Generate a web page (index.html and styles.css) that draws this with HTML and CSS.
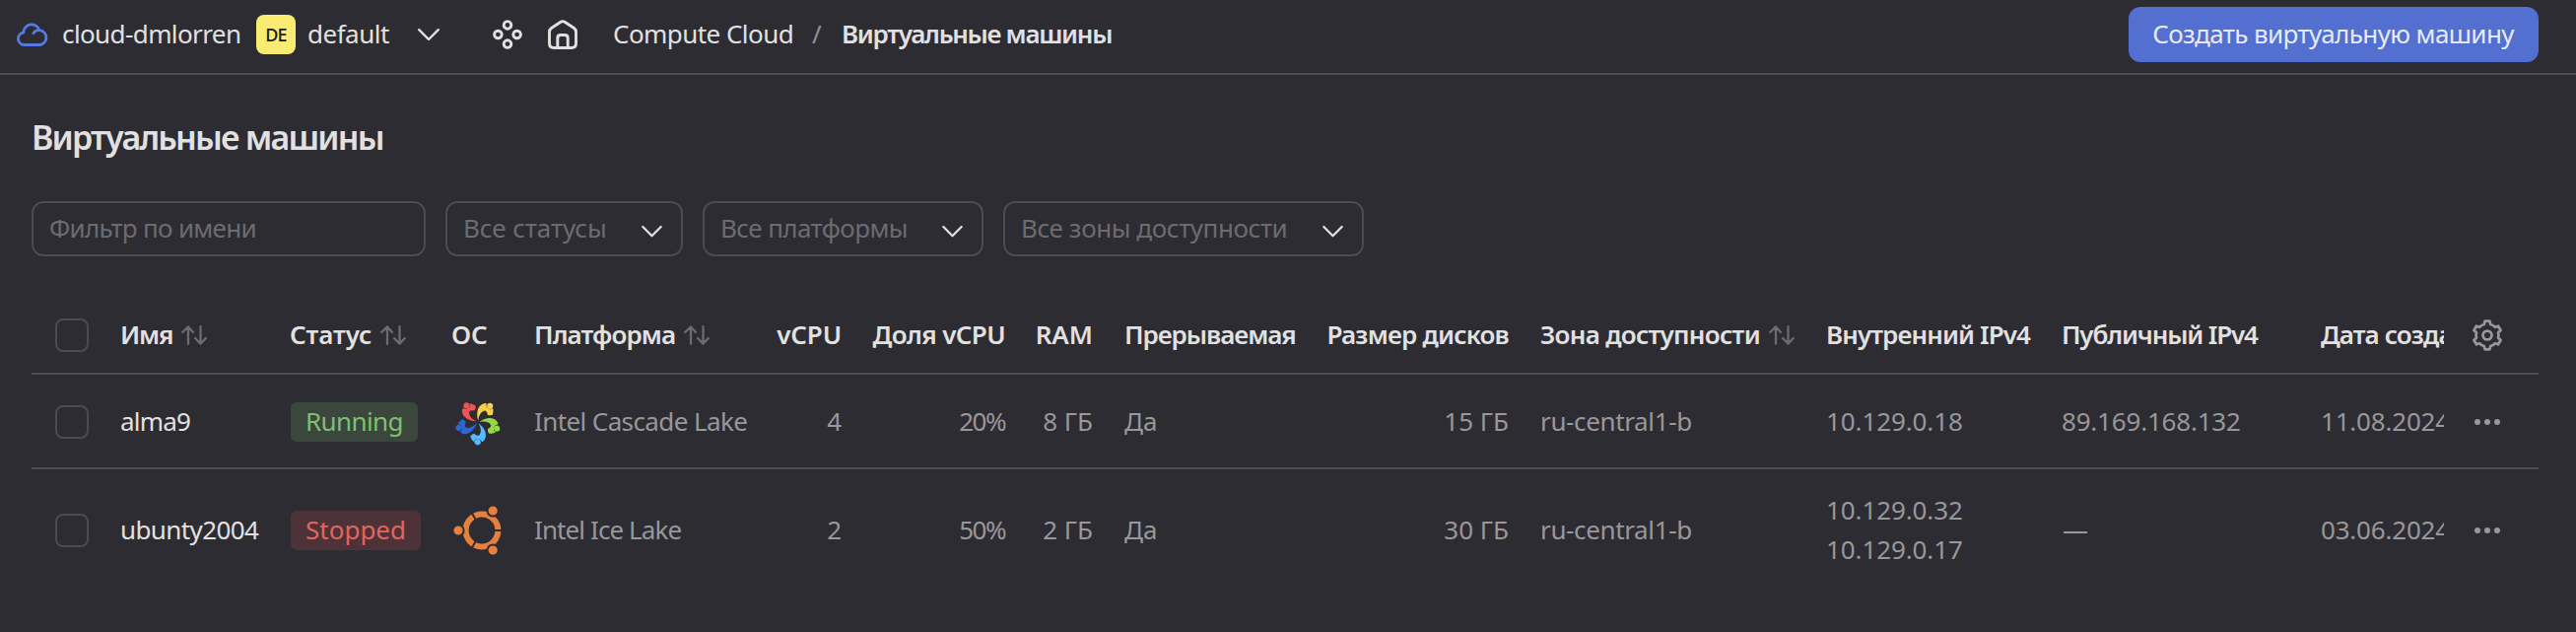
FILE: index.html
```html
<!DOCTYPE html>
<html lang="ru">
<head>
<meta charset="utf-8">
<title>Виртуальные машины</title>
<link rel="stylesheet" href="styles.css">
</head>
<body>
<svg class="defs" aria-hidden="true">
  <symbol id="sort" viewBox="0 0 26 20">
    <path d="M7 18.8V1.6M1.2 7 7 1.4 12 7M19.5 1.2v17.2M14 13l5.5 5.6L24.8 13" fill="none" stroke="currentColor" stroke-width="2.3" stroke-linecap="round" stroke-linejoin="round"/>
  </symbol>
  <symbol id="chevron" viewBox="0 0 24 16">
    <path d="M2.2 3.2 12 13l9.8-9.8" fill="none" stroke="currentColor" stroke-width="2.4" stroke-linecap="round" stroke-linejoin="round"/>
  </symbol>
  <symbol id="dots" viewBox="0 0 28 8">
    <g fill="currentColor"><circle cx="4" cy="4" r="3"/><circle cx="14" cy="4" r="3"/><circle cx="24" cy="4" r="3"/></g>
  </symbol>
  <symbol id="petal" viewBox="-24 -24 48 48" overflow="visible">
    <path d="M.2-1.500C-2-9-.5-17 6-18.800 7-19 7.800-19 8.600-18.800 8-16.300 9.200-14 11.600-13 13-12.500 14.400-13 15-14.200 15.800-12 15.600-9.500 14.800-7.200 13.400-6.500 11.400-6.600 9.800-7.300 9.700-9 8.900-10.600 7.600-11.600 3.600-11.500 1.200-7.500.2-1.500z"/>
    <circle cx="12.200" cy="-16.200" r="3.100"/>
  </symbol>
</svg>

<header class="topbar">
  <svg class="cloud" viewBox="0 0 34 28"><path d="M9.200 24.500A6.300 6.300 0 0 1 8.800 12 8.300 8.300 0 0 1 25 9.600 7.500 7.500 0 0 1 25.500 24.500ZM18.800 12.800Q20.500 9.500 25 9.600" fill="none" stroke="currentColor" stroke-width="2.800" stroke-linecap="round" stroke-linejoin="round"/></svg>
  <span class="text cloud-name">cloud-dmlorren</span>
  <span class="avatar">DE</span>
  <span class="text folder-name">default</span>
  <svg class="chevron folder-chevron"><use href="#chevron"/></svg>
  <svg class="icon services" viewBox="0 0 30 30"><g fill="none" stroke="currentColor" stroke-width="2.900"><circle cx="15" cy="5.400" r="3.800"/><circle cx="5.400" cy="15" r="3.800"/><circle cx="24.600" cy="15" r="3.800"/><circle cx="15" cy="24.600" r="3.800"/></g></svg>
  <svg class="icon home" viewBox="0 0 30 30"><path d="M1.500 12.500Q1.500 10 3.500 8.500L13 2.200Q15 1 17 2.200L26.500 8.500Q28.500 10 28.500 12.500V24Q28.500 28.500 24 28.500H6Q1.500 28.500 1.500 24ZM9.800 28V18.500Q9.800 15.500 13 15.500H17Q20.200 15.500 20.200 18.500V28" fill="none" stroke="currentColor" stroke-width="2.900" stroke-linejoin="round"/></svg>
  <nav class="crumbs">
    <span class="text crumb">Compute Cloud</span>
    <span class="text slash">/</span>
    <span class="text current">Виртуальные машины</span>
  </nav>
  <button class="create"><span>Создать виртуальную машину</span></button>
</header>

<main class="page">
  <h1 class="title">Виртуальные машины</h1>
  <div class="filters">
    <div class="field search"><span class="ls-7">Фильтр по имени</span></div>
    <div class="field status"><span class="ls-1">Все статусы</span><svg class="chevron"><use href="#chevron"/></svg></div>
    <div class="field platform"><span class="ls-6">Все платформы</span><svg class="chevron"><use href="#chevron"/></svg></div>
    <div class="field zone"><span class="ls-4">Все зоны доступности</span><svg class="chevron"><use href="#chevron"/></svg></div>
  </div>

  <table class="vms">
    <colgroup>
      <col class="c-check"><col class="c-name"><col class="c-status"><col class="c-os"><col class="c-platform"><col class="c-cpu"><col class="c-share"><col class="c-ram"><col class="c-preempt"><col class="c-disk"><col class="c-zone"><col class="c-int"><col class="c-pub"><col class="c-date"><col class="c-act">
    </colgroup>
    <thead>
      <tr>
        <th class="check"><span class="box"></span></th>
        <th><div class="head"><span class="ls-11">Имя</span><svg class="sort"><use href="#sort"/></svg></div></th>
        <th><div class="head"><span class="ls-1">Статус</span><svg class="sort"><use href="#sort"/></svg></div></th>
        <th><div class="head"><span>ОС</span></div></th>
        <th><div class="head"><span class="ls-9">Платформа</span><svg class="sort"><use href="#sort"/></svg></div></th>
        <th class="num"><div class="head"><span class="ls-1">vCPU</span></div></th>
        <th class="num"><div class="head"><span class="ls-6">Доля vCPU</span></div></th>
        <th class="num"><div class="head"><span>RAM</span></div></th>
        <th><div class="head"><span class="ls-10">Прерываемая</span></div></th>
        <th class="num"><div class="head"><span class="ls-8">Размер дисков</span></div></th>
        <th><div class="head"><span class="ls-7">Зона доступности</span><svg class="sort"><use href="#sort"/></svg></div></th>
        <th><div class="head"><span class="ls-9">Внутренний IPv4</span></div></th>
        <th><div class="head"><span class="ls-11">Публичный IPv4</span></div></th>
        <th class="date"><div class="head"><span class="ls-9">Дата создания</span></div></th>
        <th class="act"><svg class="gear" viewBox="-15 -15 30 30"><g fill="none" stroke="currentColor" stroke-width="2.600" stroke-linejoin="round"><path d="M-3-10.300-2.300-13.400H2.300L3-10.300Q5.500-9.700 7.400-7.750L10.400-8.700 12.700-4.700 10.400-2.550Q11 0 10.400 2.550L12.700 4.700 10.400 8.700 7.400 7.750Q5.500 9.700 3 10.300L2.300 13.400H-2.300L-3 10.300Q-5.500 9.700-7.400 7.750L-10.400 8.700-12.700 4.700-10.400 2.550Q-11 0-10.400-2.550L-12.700-4.700-10.400-8.700-7.400-7.750Q-5.500-9.700-3-10.300Z"/><circle r="4.200"/></g></svg></th>
      </tr>
    </thead>
    <tbody>
      <tr class="row-one">
        <td class="check"><span class="box"></span></td>
        <td class="name"><span class="ls-8">alma9</span></td>
        <td class="gfx"><span class="label running"><span class="ls-6">Running</span></span></td>
        <td class="gfx os"><svg class="logo" viewBox="-27 -27 54 54">
          <use href="#petal" x="-24" y="-24" width="48" height="48" fill="#f9cf45"/>
          <use href="#petal" x="-24" y="-24" width="48" height="48" fill="#97d84b" transform="rotate(72)"/>
          <use href="#petal" x="-24" y="-24" width="48" height="48" fill="#58bbfb" transform="rotate(144)"/>
          <use href="#petal" x="-24" y="-24" width="48" height="48" fill="#2b66d5" transform="rotate(216)"/>
          <use href="#petal" x="-24" y="-24" width="48" height="48" fill="#ef5450" transform="rotate(288)"/>
        </svg></td>
        <td><span class="ls-6">Intel Cascade Lake</span></td>
        <td class="num">4</td>
        <td class="num"><span class="ls-15">20%</span></td>
        <td class="num">8 ГБ</td>
        <td>Да</td>
        <td class="num">15 ГБ</td>
        <td><span class="ls-3">ru-central1-b</span></td>
        <td><span class="ls-1">10.129.0.18</span></td>
        <td><span class="ls-2">89.169.168.132</span></td>
        <td class="date"><span class="ls-2">11.08.2024, 12:40</span></td>
        <td class="act gfx"><svg class="dots"><use href="#dots"/></svg></td>
      </tr>
      <tr class="row-two">
        <td class="check"><span class="box"></span></td>
        <td class="name"><span class="ls-6">ubunty2004</span></td>
        <td class="gfx"><span class="label stopped"><span>Stopped</span></span></td>
        <td class="gfx os"><svg class="logo" viewBox="-31 -27 54 54">
          <circle r="16.400" fill="none" stroke="#e7803c" stroke-width="6"/>
          <path d="M12 0H21M-6-10.400-10.500-18.200M-6 10.400-10.500 18.200" stroke="#2d2c33" stroke-width="2"/>
          <g fill="#e7803c" stroke="#2d2c33" stroke-width="2"><circle cx="-24" cy="0" r="5.600"/><circle cx="11.200" cy="-20" r="5.600"/><circle cx="11.200" cy="20" r="5.600"/></g>
        </svg></td>
        <td><span class="ls-9">Intel Ice Lake</span></td>
        <td class="num">2</td>
        <td class="num"><span class="ls-15">50%</span></td>
        <td class="num">2 ГБ</td>
        <td>Да</td>
        <td class="num">30 ГБ</td>
        <td><span class="ls-3">ru-central1-b</span></td>
        <td><span class="ls-1">10.129.0.32<br>10.129.0.17</span></td>
        <td class="empty">—</td>
        <td class="date"><span class="ls-2">03.06.2024, 15:20</span></td>
        <td class="act gfx"><svg class="dots"><use href="#dots"/></svg></td>
      </tr>
    </tbody>
  </table>
</main>
</body>
</html>
```
FILE: styles.css
```css
* { box-sizing: border-box; }

body {
  margin: 0;
  height: 641px;
  overflow: hidden;
  background: #2d2c33;
  color: #e1e1e1;
  font: 400 26px/40px "Noto Sans", "Open Sans", sans-serif;
}

svg { display: block; flex: none; }
.defs { position: absolute; width: 0; height: 0; }

/* letter-spacing steps, in tenths of a pixel */
.ls-1 { letter-spacing: -.1px; }
.ls-2 { letter-spacing: -.2px; }
.ls-3 { letter-spacing: -.36px; }
.ls-4 { letter-spacing: -.42px; }
.ls-5 { letter-spacing: -.5px; }
.ls-6 { letter-spacing: -.6px; }
.ls-7 { letter-spacing: -.7px; }
.ls-8 { letter-spacing: -.8px; }
.ls-9 { letter-spacing: -.9px; }
.ls-10 { letter-spacing: -1.02px; }
.ls-11 { letter-spacing: -1.16px; }
.ls-15 { letter-spacing: -1.5px; }

/* Top bar */
.topbar {
  display: flex;
  align-items: center;
  height: 76px;
  padding: 0 38px 4px 15px;
  border-bottom: 2px solid #4c4b51;
  white-space: nowrap;
}
.topbar .text { padding-bottom: 2px; }
.cloud { width: 34px; height: 28px; color: #5779e6; margin-right: 14px; }
.cloud-name { letter-spacing: -.6px; width: 181px; }
.avatar {
  width: 40px;
  height: 40px;
  margin: 0 12px 0 16px;
  border-radius: 8px;
  background: #faec72;
  color: #1c1b1a;
  font-size: 18px;
  font-weight: 500;
  letter-spacing: -.8px;
  text-align: center;
}
.folder-name { letter-spacing: -.5px; width: 81px; }
.chevron { width: 24px; height: 16px; }
.folder-chevron { margin-left: 30px; }
.icon { width: 30px; height: 30px; }
.services { margin-left: 53px; }
.home { margin-left: 26px; }
.crumbs { display: flex; margin-left: 36px; }
.crumb { letter-spacing: -.55px; width: 202px; }
.slash { color: #919095; width: 30px; }
.current { font-weight: 600; letter-spacing: -1.3px; }
.create {
  width: 416px;
  height: 56px;
  margin-left: auto;
  padding: 0 1px 2px 0;
  border: 0;
  border-radius: 12px;
  background: #5370d0;
  color: #e6eaf8;
  font: inherit;
  letter-spacing: -.62px;
}

/* Page */
.page { padding: 40px 38px 0 32px; }
.title { margin: 0; font-size: 34px; line-height: 46px; font-weight: 600; letter-spacing: -1.8px; }
.filters { display: flex; gap: 20px; margin-top: 42px; }
.field {
  display: flex;
  align-items: center;
  justify-content: space-between;
  height: 56px;
  padding: 0 18px 0 16px;
  border: 2px solid #4c4b51;
  border-radius: 12px;
  color: #6c6b70;
  white-space: nowrap;
}
.field span { padding-bottom: 2px; }
.field .chevron { width: 23px; height: 15px; color: #e1e1e1; margin-top: 4px; }
.search { width: 400px; }
.status { width: 241px; }
.platform { width: 285px; }
.zone { width: 366px; }

/* Table */
.vms { width: 2544px; margin-top: 42px; table-layout: fixed; border-collapse: separate; border-spacing: 0; }
.c-check { width: 74px; }
.c-name { width: 172px; }
.c-status { width: 164px; }
.c-os { width: 84px; }
.c-platform { width: 247px; }
.c-cpu { width: 97px; }
.c-share { width: 166px; }
.c-ram { width: 89px; }
.c-preempt { width: 205px; }
.c-disk { width: 217px; }
.c-zone { width: 290px; }
.c-int { width: 239px; }
.c-pub { width: 263px; }
.c-date { width: 141px; }
.c-act { width: 96px; }

th, td { padding: 0 16px; text-align: left; vertical-align: middle; white-space: nowrap; }
th { height: 78px; font-weight: 600; border-bottom: 2px solid #4c4b51; }
td { color: #98979a; }
.row-one td { height: 96px; border-bottom: 2px solid #4c4b51; }
.row-two td { height: 122px; }
.name { color: #e1e1e1; }
.num { text-align: right; }
.num .head { justify-content: flex-end; }
.head { display: flex; align-items: center; }
.head span { padding-bottom: 2px; }
.sort { width: 26px; height: 20px; margin-left: 9px; color: #6c6b70; }
.check { padding: 0 0 0 24px; }
td.check, td.gfx { padding-top: 2px; }
.box { display: block; width: 34px; height: 34px; border: 2px solid #4c4b51; border-radius: 8px; }
.label {
  display: block;
  width: 129px;
  height: 40px;
  margin-left: 1px;
  padding-left: 15px;
  border-radius: 6px;
  line-height: 38px;
}
.running { background: #3b463d; color: #7fbf72; }
.stopped { width: 132px; background: #4d3337; color: #e0655f; }
.os { padding-left: 16px; }
.logo { width: 54px; height: 54px; }
.empty { padding-left: 17px; }
.date { padding-right: 0; overflow: hidden; }
.act { color: #98979a; padding-left: 28px; }
.gear { width: 32px; height: 32px; }
.dots { width: 28px; height: 8px; margin-left: 2px; }
```
